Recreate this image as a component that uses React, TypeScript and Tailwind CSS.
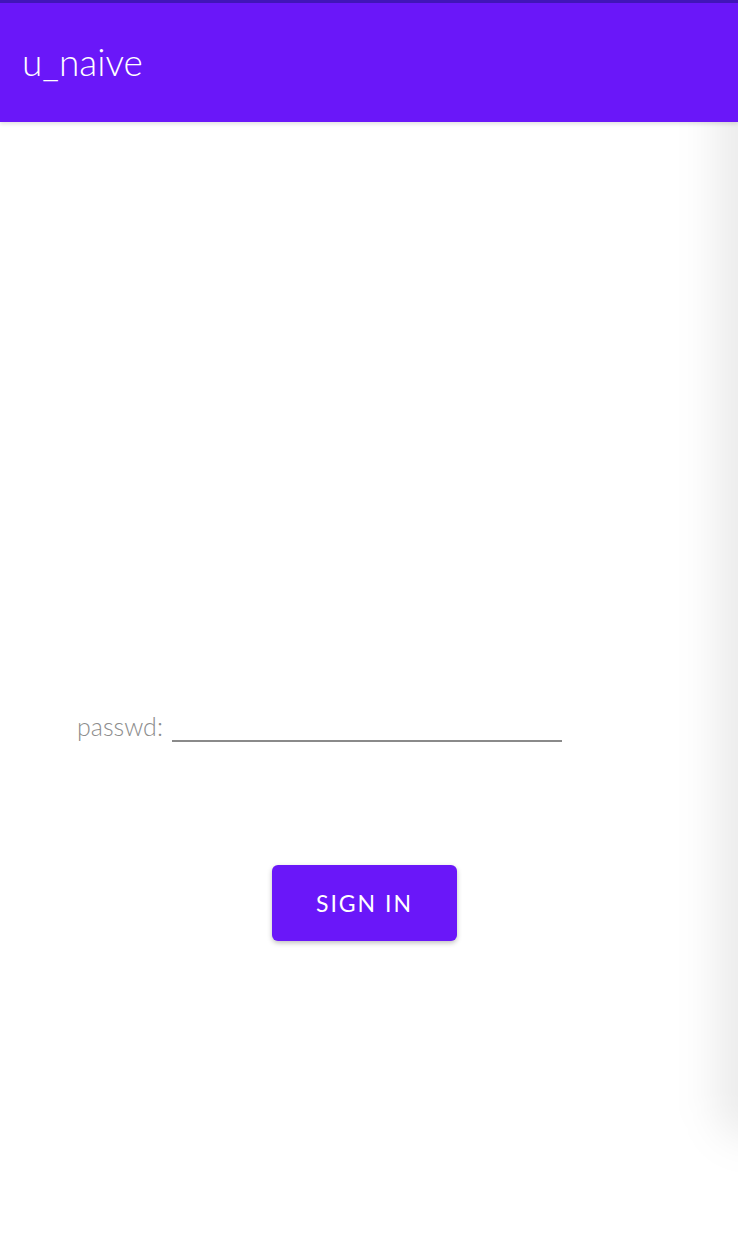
import { ReactElement } from "react";

const App = (): ReactElement => {
  return (
    <div
      className="relative flex h-[1236px] w-[738px] flex-col overflow-hidden bg-white"
      style={{ fontFamily: "Lato, 'Noto Sans', sans-serif" }}
    >
      <header className="relative z-10 flex h-[122px] flex-col bg-[#6a17f9] shadow-[0_2px_4px_rgba(0,0,0,0.12)]">
        <div className="h-[3px] bg-[#4115b8]" />
        <h1 className="flex flex-1 items-center pb-[2px] pl-[22px] text-[37px] font-light text-white">
          u_naive
        </h1>
      </header>

      <main className="flex flex-1 flex-col">
        <form className="mt-[588px] flex flex-col items-center">
          <div className="flex w-full items-end pl-[77px]">
            <label
              htmlFor="passwd"
              className="mb-[3px] mr-[9px] text-[25px] font-light leading-none text-[#8d8d8d]"
            >
              passwd:
            </label>
            <input
              type="password"
              id="passwd"
              name="passwd"
              className="h-[32px] w-[390px] border-b-[2px] border-[#8a8a8a] outline-none"
            />
          </div>

          <button
            type="button"
            className="mr-[9px] mt-[123px] h-[76px] w-[185px] rounded-[6px] bg-[#6a17f9] text-[23px] tracking-[2px] text-white shadow-[0_2px_5px_rgba(0,0,0,0.25)]"
          >
            SIGN IN
          </button>
        </form>
      </main>

      {/* edge shadow of a side panel */}
      <div className="pointer-events-none absolute top-[60px] right-[-48px] h-[1080px] w-[70px] rounded-full bg-black/[0.08] blur-[20px]" />
    </div>
  );
};

export default App;
